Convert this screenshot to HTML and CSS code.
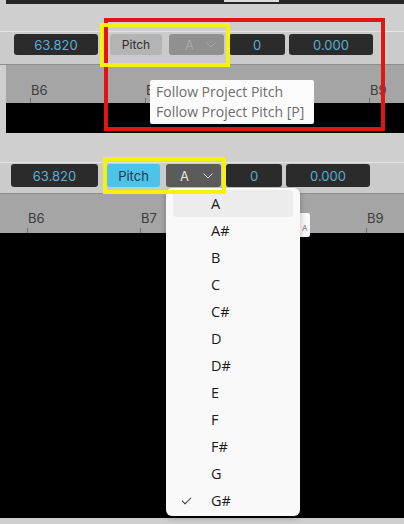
FILE: index.html
```html
<!DOCTYPE html>
<html lang="en">
<head>
    <meta charset="UTF-8">
    <title>Pitch</title>
    <link rel="stylesheet" href="styles.css">
</head>
<body>
    <section class="panel panel-top">
        <div class="strip"><span class="strip-tab"></span></div>
        <div class="toolbar">
            <span class="field num w84 ml14">63.820</span>
            <span class="field pitch w52 ml12">Pitch</span>
            <span class="field key key-off w55 ml7">A
                <svg class="chev" width="10" height="6" viewBox="0 0 10 6"><polyline points="0.5,0.5 5,5 9.5,0.5" fill="none" stroke="currentColor" stroke-width="1"/></svg>
            </span>
            <span class="field num w56 ml5">0</span>
            <span class="field num w84 ml4">0.000</span>
        </div>
        <div class="ruler">
            <span class="mark" style="left:24px">B6</span>
            <span class="mark" style="left:139px">B7</span>
            <span class="mark" style="left:363px">B9</span>
        </div>
        <div class="track"></div>

        <div class="tip">
            <div>Follow Project Pitch</div>
            <div>Follow Project Pitch [P]</div>
        </div>
        <div class="frame frame-red"></div>
        <div class="frame frame-yellow yt"></div>
    </section>

    <section class="panel panel-bottom">
        <div class="toolbar toolbar-b">
            <span class="field num w87 ml11">63.820</span>
            <span class="field pitch on w53 ml9">Pitch</span>
            <span class="field key w55 ml6">A
                <svg class="chev" width="10" height="6" viewBox="0 0 10 6"><polyline points="0.5,0.5 5,5 9.5,0.5" fill="none" stroke="currentColor" stroke-width="1"/></svg>
            </span>
            <span class="field num w56 ml5">0</span>
            <span class="field num w84 ml4">0.000</span>
        </div>
        <div class="ruler ruler-b">
            <span class="mark" style="left:27px">B6</span>
            <span class="mark" style="left:140px">B7</span>
            <span class="mark" style="left:366px">B9</span>
        </div>
        <div class="track track-b"></div>

        <div class="ghost">A</div>
        <ul class="menu">
            <li class="hover">A</li>
            <li>A#</li>
            <li>B</li>
            <li>C</li>
            <li>C#</li>
            <li>D</li>
            <li>D#</li>
            <li>E</li>
            <li>F</li>
            <li>F#</li>
            <li>G</li>
            <li class="checked">G#</li>
        </ul>
        <div class="frame frame-yellow yb"></div>
    </section>
</body>
</html>
```

FILE: styles.css
```css
body,html{
    margin:0;
    width:404px;
    height:524px;
    overflow:hidden;
    background:#cfcfcf;
    font-family:Inter, "Liberation Sans", sans-serif;
}
.panel{
    position:relative;
}
.panel-top{
    height:140px;
}
.panel-bottom{
    height:384px;
    padding-top:22px;
    box-sizing:border-box;
}

/* top dark strip */
.strip{
    height:4px;
    margin-left:6px;
    background:#262626;
    position:relative;
}
.strip-tab{
    position:absolute;
    left:218px;
    top:0;
    width:55px;
    height:2px;
    background:#dcdcdc;
}

/* toolbar */
.toolbar{
    margin-top:27px;
    height:30px;
    border-top:1px solid #e4e4e4;
    border-bottom:1px solid #8e8e8e;
    background:#cbcbcb;
    display:flex;
    align-items:flex-start;
    padding-top:2px;
}
.toolbar-b{
    margin-top:0;
    height:29px;
    padding-top:1px;
}
.toolbar-b .field{
    height:23px;
}
.field{
    height:21px;
    border-radius:3px;
    display:flex;
    align-items:center;
    justify-content:center;
    font-size:13px;
    box-sizing:border-box;
}
.num{
    background:#2b2b2b;
    color:#5aaed2;
}
.pitch{
    background:#b4b4b4;
    color:#2c2c2c;
    font-size:12px;
}
.pitch.on{
    background:#4ec3ea;
    color:#1d3b4c;
    font-size:13px;
}
.key{
    background:#5b5b5b;
    color:#e6e6e6;
    justify-content:flex-start;
    padding-left:14px;
}
.key-off{
    background:#909090;
    color:#a9a9a9;
    padding-left:16px;
}
.chev{
    margin-left:auto;
    margin-right:8px;
}
.w52{width:52px;}
.w53{width:53px;}
.w55{width:55px;}
.w56{width:56px;}
.w84{width:84px;}
.w87{width:87px;}
.ml4{margin-left:4px;}
.ml5{margin-left:5px;}
.ml6{margin-left:6px;}
.ml7{margin-left:7px;}
.ml9{margin-left:9px;}
.ml11{margin-left:11px;}
.ml12{margin-left:12px;}
.ml14{margin-left:14px;}

/* ruler */
.ruler{
    height:38px;
    margin-left:6px;
    background:#a5a5a5;
    position:relative;
}
.ruler-b{
    margin-left:0;
    height:39px;
}
.mark{
    position:absolute;
    bottom:0;
    height:21px;
    padding-left:1px;
    font-size:13px;
    color:#3c3c3c;
    line-height:16px;
    box-sizing:border-box;
}
.mark::after{
    content:'';
    position:absolute;
    left:0;
    bottom:0;
    width:1px;
    height:5px;
    background:#6e6e6e;
}
.ruler-b .mark{
    height:23px;
}
.track{
    height:30px;
    margin-left:6px;
    background:#000;
}
.track-b{
    margin-left:0;
    height:285px;
}

/* overlays */
.frame{
    position:absolute;
    box-sizing:border-box;
}
.frame-red{
    left:104px;
    top:18px;
    width:281px;
    height:113px;
    border:4px solid #e21414;
}
.frame-yellow{
    border:4px solid #f4f20e;
}
.yt{
    left:100px;
    top:23px;
    width:130px;
    height:44px;
}
.yb{
    left:103px;
    top:17px;
    width:123px;
    height:37px;
}
.tip{
    position:absolute;
    left:150px;
    top:80px;
    width:164px;
    height:44px;
    background:#fcfcfc;
    border-radius:2px;
    box-sizing:border-box;
    padding:2px 0 0 6px;
    font-family:"Open Sans", "Noto Sans", sans-serif;
    font-size:14px;
    line-height:20px;
    color:#6c6c6c;
}
.ghost{
    position:absolute;
    left:296px;
    top:73px;
    width:14px;
    height:24px;
    background:#f8f8f8;
    border-radius:2px;
    font-size:8px;
    line-height:10px;
    color:#777;
    padding:10px 0 0 6px;
    box-sizing:border-box;
}
.menu{
    position:absolute;
    left:166px;
    top:48px;
    width:134px;
    margin:0;
    padding:2px 0;
    list-style:none;
    background:#f9f9f9;
    border-radius:6px;
    box-shadow:0 2px 6px rgba(0,0,0,0.25);
    font-family:"Open Sans", "Noto Sans", sans-serif;
    font-size:14.5px;
    color:#1b1b1b;
}
.menu li{
    height:27px;
    line-height:27px;
    padding-left:45px;
    position:relative;
}
.menu li.hover{
    margin:0 7px;
    padding-left:38px;
    background:#ececec;
    border-radius:4px;
}
.menu li.checked::before{
    content:'';
    position:absolute;
    left:16px;
    top:10px;
    width:8px;
    height:4px;
    border-left:1px solid #333;
    border-bottom:1px solid #333;
    transform:rotate(-45deg);
}
```
